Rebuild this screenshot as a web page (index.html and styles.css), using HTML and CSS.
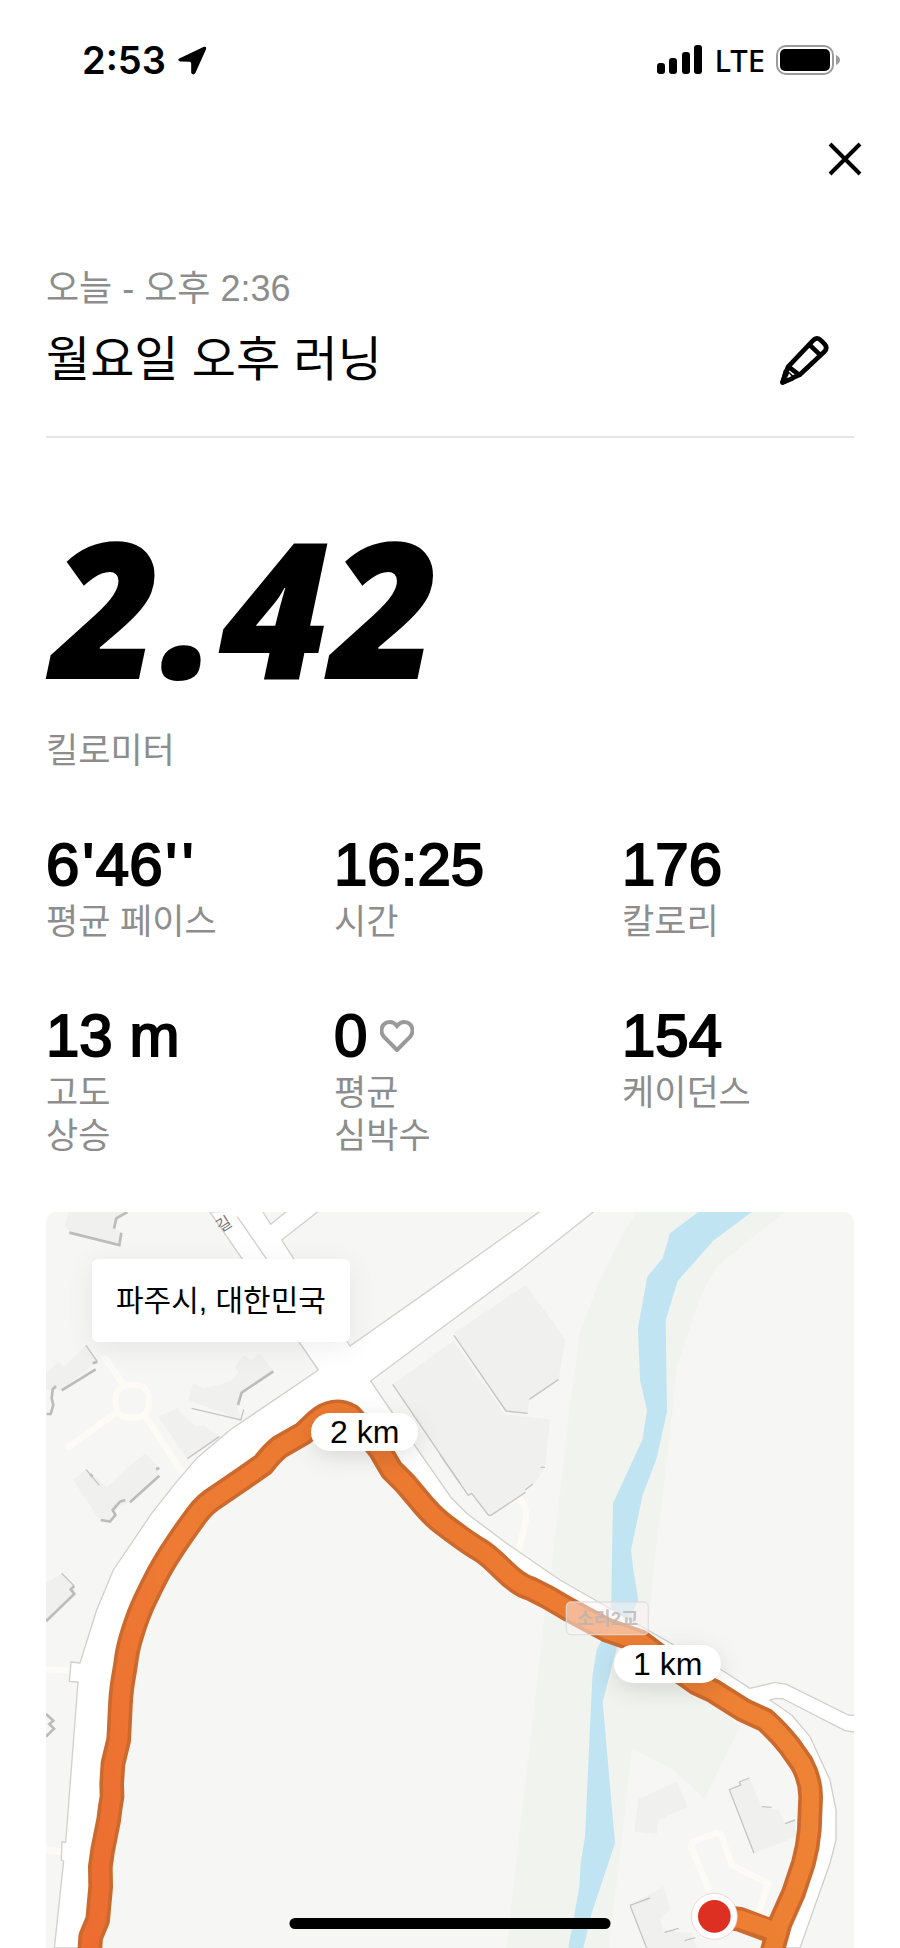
FILE: index.html
```html
<!DOCTYPE html>
<html lang="ko">
<head>
<meta charset="utf-8">
<meta name="viewport" content="width=device-width, initial-scale=1">
<title>월요일 오후 러닝</title>
<link rel="stylesheet" href="styles.css">
</head>
<body>
<div class="screen">
  <div class="status">
    <div class="status-side">
      <span class="status-time">2:53</span>
      <svg class="icon-location" viewBox="320 43 94 94" aria-hidden="true"><path d="M327 84 400 49Q411 45 408 56L376 127Q370 137 363 128V98Q362 95 359 94L329 93Q320 89 327 84Z"/></svg>
    </div>
    <div class="status-side">
      <svg class="icon-signal" viewBox="0 0 46 30" aria-hidden="true"><rect x="0" y="18" width="8" height="11" rx="3"/><rect x="12" y="13" width="8" height="16" rx="3"/><rect x="25" y="7" width="8" height="22" rx="3"/><rect x="37" y="0" width="8" height="29" rx="3"/></svg>
      <span class="status-net">LTE</span>
      <svg class="icon-battery" viewBox="0 0 64 30" aria-hidden="true"><rect class="battery-shell" x="1" y="1" width="56" height="28" rx="9"/><rect x="4" y="4" width="50" height="22" rx="5"/><path class="battery-nub" d="M60 10Q64 12 64 15T60 20Z"/></svg>
    </div>
  </div>

  <div class="toolbar">
    <button class="icon-button" type="button" aria-label="닫기">
      <svg class="icon-close" viewBox="0 0 34 34" aria-hidden="true"><path d="M2 2 32 32M32 2 2 32"/></svg>
    </button>
  </div>

  <main class="content">
    <header class="run-header">
      <div class="run-text">
        <p class="run-time">오늘 - 오후 2:36</p>
        <h1 class="run-title">월요일 오후 러닝</h1>
      </div>
      <button class="icon-button edit-button" type="button" aria-label="이름 편집">
        <svg class="icon-pencil" viewBox="58 43 152 152" aria-hidden="true"><path d="M68 184 85 138 159 60Q171 47 183 59L194 70Q204 81 193 93L119 162ZM148 71 181 103M87 138 118 162"/><path d="M78 152 98 172 70 184Z"/><path class="pencil-tip" d="M88 157 95 166 83 171Z"/></svg>
      </button>
    </header>

    <section class="distance">
      <p class="distance-value">2.42</p>
      <p class="label">킬로미터</p>
    </section>

    <dl class="stats">
      <div class="stat"><dd class="value"><span>6<span class="prime">'</span>46<span class="prime">'</span><span class="prime">'</span></span></dd><dt class="label">평균 페이스</dt></div>
      <div class="stat"><dd class="value">16:25</dd><dt class="label">시간</dt></div>
      <div class="stat"><dd class="value">176</dd><dt class="label">칼로리</dt></div>
      <div class="stat"><dd class="value">13 m</dd><dt class="label">고도<br>상승</dt></div>
      <div class="stat"><dd class="value">0<svg class="icon-heart" viewBox="0 0 34 32" aria-hidden="true"><path d="M17 30 4 17C-1 11 2 2 10 2Q14 2 17 6 20 2 24 2C32 2 35 11 30 17Z"/></svg></dd><dt class="label">평균<br>심박수</dt></div>
      <div class="stat"><dd class="value">154</dd><dt class="label">케이던스</dt></div>
    </dl>

    <section class="map" aria-label="러닝 경로">
      <svg class="map-art" viewBox="48 36 2424 2208" preserveAspectRatio="xMidYMin slice" aria-hidden="true">
        <defs>
          <linearGradient id="heat" gradientUnits="userSpaceOnUse" x1="150" y1="2244" x2="2300" y2="1500">
            <stop offset="0" stop-color="#ec6c31"/><stop offset=".3" stop-color="#ee7b33"/><stop offset=".65" stop-color="#ec7930"/><stop offset="1" stop-color="#ee8335"/>
          </linearGradient>
        </defs>
        <path class="park" d="M1820 36 1780 100 1705 250 1650 400 1620 620 1600 800 1560 1140 1545 1240 1430 2244H1735L1770 1960 1805 1645 1930 1710 2023 1795 2130 1580 1855 1300 1870 1110 1920 700 1940 500 2010 290 2060 200 2120 150 2265 36Z"/>
        <path class="river" d="M2005 36 1920 100 1898 175 1852 230 1824 385 1830 540 1851 630 1837 720 1749 910 1743 1250 1715 1320 1700 1350 1687 1430 1665 1910 1652 1990 1648 2060 1615 2244H1660L1685 2140 1755 1930 1718 1505 1760 1345 1825 1200 1810 1110 1803 1050 1838 885 1880 775 1911 635 1907 360 1943 243 2050 122 2165 36Z"/>

        <g class="lane">
          <path d="M226 475 280 553M345 648 460 822M255 640 115 742M48 1408 120 1412M48 1950 98 1956"/>
          <rect x="257" y="555" width="100" height="98" rx="40"/>
          <path d="M1468 892Q1492 920 1488 960L1465 1055"/>
          <path d="M2035 2065 1983 1940 1990 1925 2060 1898 2073 1903 2105 1995 2215 2050 2190 2125"/>
        </g>

        <g class="building">
          <path d="M115 36 105 75 120 98 268 135 275 98 250 85 262 50 290 36Z"/>
          <path d="M48 520 85 485 100 500 170 435 200 485 95 570 48 570Z"/>
          <path d="M475 600 490 550 520 565 600 545 625 520 615 500 640 465 665 480 690 460 730 512 635 578 622 620 635 660Z"/>
          <path d="M385 650 440 625 495 680 520 675 568 710 472 778Z"/>
          <path d="M130 840 168 808 230 862 265 830 300 795 345 762 385 800 385 830 300 905 245 935 240 965 205 955Z"/>
          <path d="M48 1150 95 1120 133 1160 133 1182 48 1263Z"/>
          <path d="M1272 400 1488 254 1606 418 1586 538 1498 598 1493 640 1428 634Z"/>
          <path d="M1088 553 1270 422 1425 643 1560 658 1545 803 1510 855 1380 947 1325 880 1290 850Z"/>
          <path d="M1825 1798 1940 1745 1973 1820 1885 1860 1880 1902 1813 1895Z"/>
          <path d="M2098 1769 2158 1733 2195 1820 2245 1830 2265 1870 2295 1860 2300 1910 2172 1960Z"/>
          <path d="M1800 2115 1900 2060 1922 2130 1890 2155 1900 2190 1985 2200 2000 2244H1850Z"/>
        </g>
        <g class="shadow">
          <path d="M118 98 268 135 274 98M252 86 259 55 292 36"/>
          <path d="M95 571 197 508M188 490 202 485M78 558 68 568 65 595 70 615 62 642 50 642"/>
          <path d="M730 514 635 578 624 615"/>
          <path d="M300 907 388 827M286 900 270 905 248 930 256 945 240 965 212 960M378 808 388 804M180 822 188 830"/>
          <path d="M48 1264 133 1182 122 1168 133 1158"/>
          <path d="M48 1542 70 1562 58 1572 72 1586 48 1610"/>
        </g>
        <g class="shadow-thin">
          <path d="M485 625 633 660 641 628M168 436 202 485M168 808 208 856M95 1120 133 1158M472 776 568 710M1088 553 1290 850"/>
          <path d="M1272 406 1428 633 1493 640M1498 598 1586 538M1230 764 1315 886 1325 880 1375 945 1383 946 1486 877M1485 870 1508 852M1532 802H1545"/>
          <path d="M2172 1960 2098 1769 2132 1755 2128 1746 2158 1734M2195 1820 2225 1822M2265 1871 2295 1860M1800 2116 1860 2094M1800 2116 1850 2244M1904 2197 1946 2185M1964 2222 1996 2213"/>
        </g>

        <g class="road">
          <path d="M540 36 865 510 700 622 600 690 500 775 440 845 365 940 250 1110 200 1230 150 1389 123 1386 118 1444 144 1446 107 1927 96 1926 94 1980 101 1983 73 2244 181 2244 212 2060 245 1790 270 1600 279 1440 310 1290 385 1120 500 945 710 785 910 640 1000 690 1180 915 1410 1110 1610 1225 1830 1325 2140 1530 2280 1640 2342 1790 2320 1990 2230 2244H2310L2400 1990 2418 1920V1830L2400 1740 2340 1610 2285 1545 2220 1500 2240 1495 2260 1497 2445 1592 2480 1597V1547L2455 1545 2270 1453 2235 1447 2160 1465 2075 1410 1940 1340 1590 1140 1430 1030 1310 940 1265 895 1150 730 1022 543 1230 388 1470 210 1710 20H1550L1230 248 960 438 755 120 870 30H775L722 73 695 30Z"/>
          <path d="M622 50 760 250"/>
        </g>
        <text class="street-name" transform="translate(572 98) rotate(-33)">길</text>

        <g class="route">
          <path class="route-edge" d="M2053 2149 2130 2158 2215 2190"/>
          <path class="route-edge" d="M179 2260 182 2210 203 2160 212 2060 211 2000 218 1950 236 1860 241 1820 246 1790 245 1750 249 1690 266 1620 270 1540Q272 1480 279 1440T290 1370 310 1290 345 1200 385 1120 440 1030 500 945 560 890L640 835 700 793Q725 760 750 740L820 700 860 662Q910 618 962 647L1010 700 1050 750 1085 810 1125 850 1180 915Q1205 945 1230 965T1290 1010 1350 1050 1420 1110 1500 1165L1550 1190 1610 1225 1730 1290 1830 1325 1930 1400 2000 1450 2050 1473 2140 1530 2205 1560Q2245 1595 2280 1640L2315 1690Q2342 1740 2342 1790L2338 1890Q2334 1940 2320 1990L2290 2080 2250 2170 2225 2260"/>
          <path class="route-line" d="M2053 2149 2130 2158 2225 2190"/>
          <path class="route-line" d="M179 2260 182 2210 203 2160 212 2060 211 2000 218 1950 236 1860 241 1820 246 1790 245 1750 249 1690 266 1620 270 1540Q272 1480 279 1440T290 1370 310 1290 345 1200 385 1120 440 1030 500 945 560 890L640 835 700 793Q725 760 750 740L820 700 860 662Q910 618 962 647L1010 700 1050 750 1085 810 1125 850 1180 915Q1205 945 1230 965T1290 1010 1350 1050 1420 1110 1500 1165L1550 1190 1610 1225 1730 1290 1830 1325 1930 1400 2000 1450 2050 1473 2140 1530 2205 1560Q2245 1595 2280 1640L2315 1690Q2342 1740 2342 1790L2338 1890Q2334 1940 2320 1990L2290 2080 2250 2170 2225 2260"/>
        </g>
        <rect class="bridge-box" x="1609" y="1206" width="246" height="98" rx="14"/>
        <text class="bridge-name" x="1732" y="1274">소리2교</text>
        <circle class="start-halo" cx="2053" cy="2149" r="69"/>
        <circle class="start-dot" cx="2053" cy="2149" r="49"/>
      </svg>
      <p class="place">파주시, 대한민국</p>
      <span class="marker marker-two">2 km</span>
      <span class="marker marker-one">1 km</span>
    </section>
  </main>
  <div class="home-bar"></div>
</div>
</body>
</html>
```
FILE: styles.css
```css
* { box-sizing: border-box; }

body,
p,
h1,
dl,
dd { margin: 0; }

body {
  background: #fff;
  color: #000;
  font-family: "Liberation Sans", "Noto Sans CJK KR", sans-serif;
}

svg { display: block; flex: none; }

.screen { position: relative; overflow: hidden; }

.status {
  display: flex;
  align-items: center;
  justify-content: space-between;
  padding: 36px 60px 36px 82px;
}

.status-side {
  display: flex;
  align-items: center;
  gap: 11px;
  height: 48px;
  font-family: Inter, sans-serif;
}

.status-time { font-size: 38px; font-weight: 600; }
.status-net { font-family: "Noto Sans", sans-serif; font-size: 31px; font-weight: 500; line-height: 48px; }
.icon-location { width: 31px; height: 31px; }
.icon-signal { width: 46px; height: 30px; }
.icon-battery { width: 64px; height: 30px; }
.battery-shell { fill: none; stroke: #9b9b9b; stroke-width: 2; }
.battery-nub { fill: #9b9b9b; }

.toolbar {
  display: flex;
  justify-content: flex-end;
  padding: 15px 31px;
}

.icon-button {
  display: flex;
  align-items: center;
  justify-content: center;
  width: 48px;
  height: 48px;
  padding: 0;
  border: 0;
  background: none;
  color: #000;
}

.icon-close { width: 34px; height: 34px; fill: none; stroke: #000; stroke-width: 4; }

.edit-button { margin-bottom: 6px; }

.icon-pencil {
  width: 51px;
  height: 51px;
  fill: none;
  stroke: #000;
  stroke-width: 14;
  stroke-linejoin: round;
}

.pencil-tip { fill: #fff; stroke: none; }

.content { padding: 0 46px; }

.run-header {
  display: flex;
  align-items: flex-end;
  justify-content: space-between;
  padding: 69px 26px 46px 0;
  border-bottom: 2px solid #e5e5e5;
}

.run-time { color: #8d8d8d; font-size: 36px; line-height: 44px; }
.run-title { margin-top: 19px; font-size: 48px; font-weight: 400; line-height: 60px; }

.distance { padding-top: 68px; }

.distance-value {
  padding-left: 5px;
  font-family: "Open Sans", sans-serif;
  font-size: 190px;
  font-style: italic;
  font-weight: 800;
  line-height: 200px;
}

.label { color: #8d8d8d; font-size: 35px; line-height: 43px; }
.distance .label { margin-top: 23px; }

.stats {
  display: grid;
  grid-template-columns: repeat(3, 1fr);
  gap: 61px 56px;
  margin-top: 61px;
}

.stat { display: flex; flex-direction: column; gap: 3px; }

.value {
  display: flex;
  align-items: center;
  gap: 13px;
  font-size: 60px;
  line-height: 64px;
  -webkit-text-stroke: 2px #000;
}

.prime { padding: 0 2px 0 3px; }

.icon-heart { width: 34px; height: 32px; fill: none; stroke: #999; stroke-width: 4; }

.map {
  position: relative;
  margin-top: 55px;
  overflow: hidden;
  border-radius: 10px 10px 0 0;
  background: #f6f6f4;
}

.map-art { width: 100%; height: auto; }

.park { fill: #f1f3ee; }
.river { fill: #c1e4f3; }
.building { fill: #f0f0ef; }
.lane { fill: none; stroke: #fcfbf6; stroke-width: 19; stroke-linecap: round; stroke-linejoin: round; }
.shadow { fill: none; stroke: #bcbcbb; stroke-width: 8; }
.shadow-thin { fill: none; stroke: #c7c5c3; stroke-width: 4; }
.road { fill: #fff; stroke: #d3d0cc; stroke-width: 4; stroke-linejoin: round; }
.route { fill: none; stroke-linejoin: round; }
.route-edge { stroke: #cc6a2d; stroke-width: 74; }
.route-line { stroke: url(#heat); stroke-width: 52; }
.bridge-box { fill: #fdf3f5; fill-opacity: .5; stroke: #dcdcdc; stroke-opacity: .8; stroke-width: 4; }
.bridge-name { fill: #b9b4b2; fill-opacity: .8; font-size: 56px; font-weight: 700; text-anchor: middle; }
.street-name { fill: #777; font-size: 48px; }
.start-halo { fill: #fff; stroke: #f0c4c0; stroke-width: 2; }
.start-dot { fill: #dd3022; }

.place {
  position: absolute;
  top: 47px;
  left: 46px;
  padding: 20px 24px;
  border-radius: 6px;
  background: #fff;
  box-shadow: 0 6px 28px rgba(0, 0, 0, .07);
  font-size: 30px;
  line-height: 43px;
}

.marker {
  position: absolute;
  padding: 0 19px;
  border-radius: 19px;
  background: #fff;
  box-shadow: 0 6px 24px rgba(0, 0, 0, .12);
  font-size: 32px;
  line-height: 38px;
}

.marker-two { top: 27.3%; left: 32.8%; }
.marker-one { top: 58.8%; left: 70.3%; }

.home-bar {
  position: absolute;
  bottom: 19px;
  left: 50%;
  width: 321px;
  height: 11px;
  border-radius: 6px;
  background: #000;
  transform: translateX(-50%);
}
```
